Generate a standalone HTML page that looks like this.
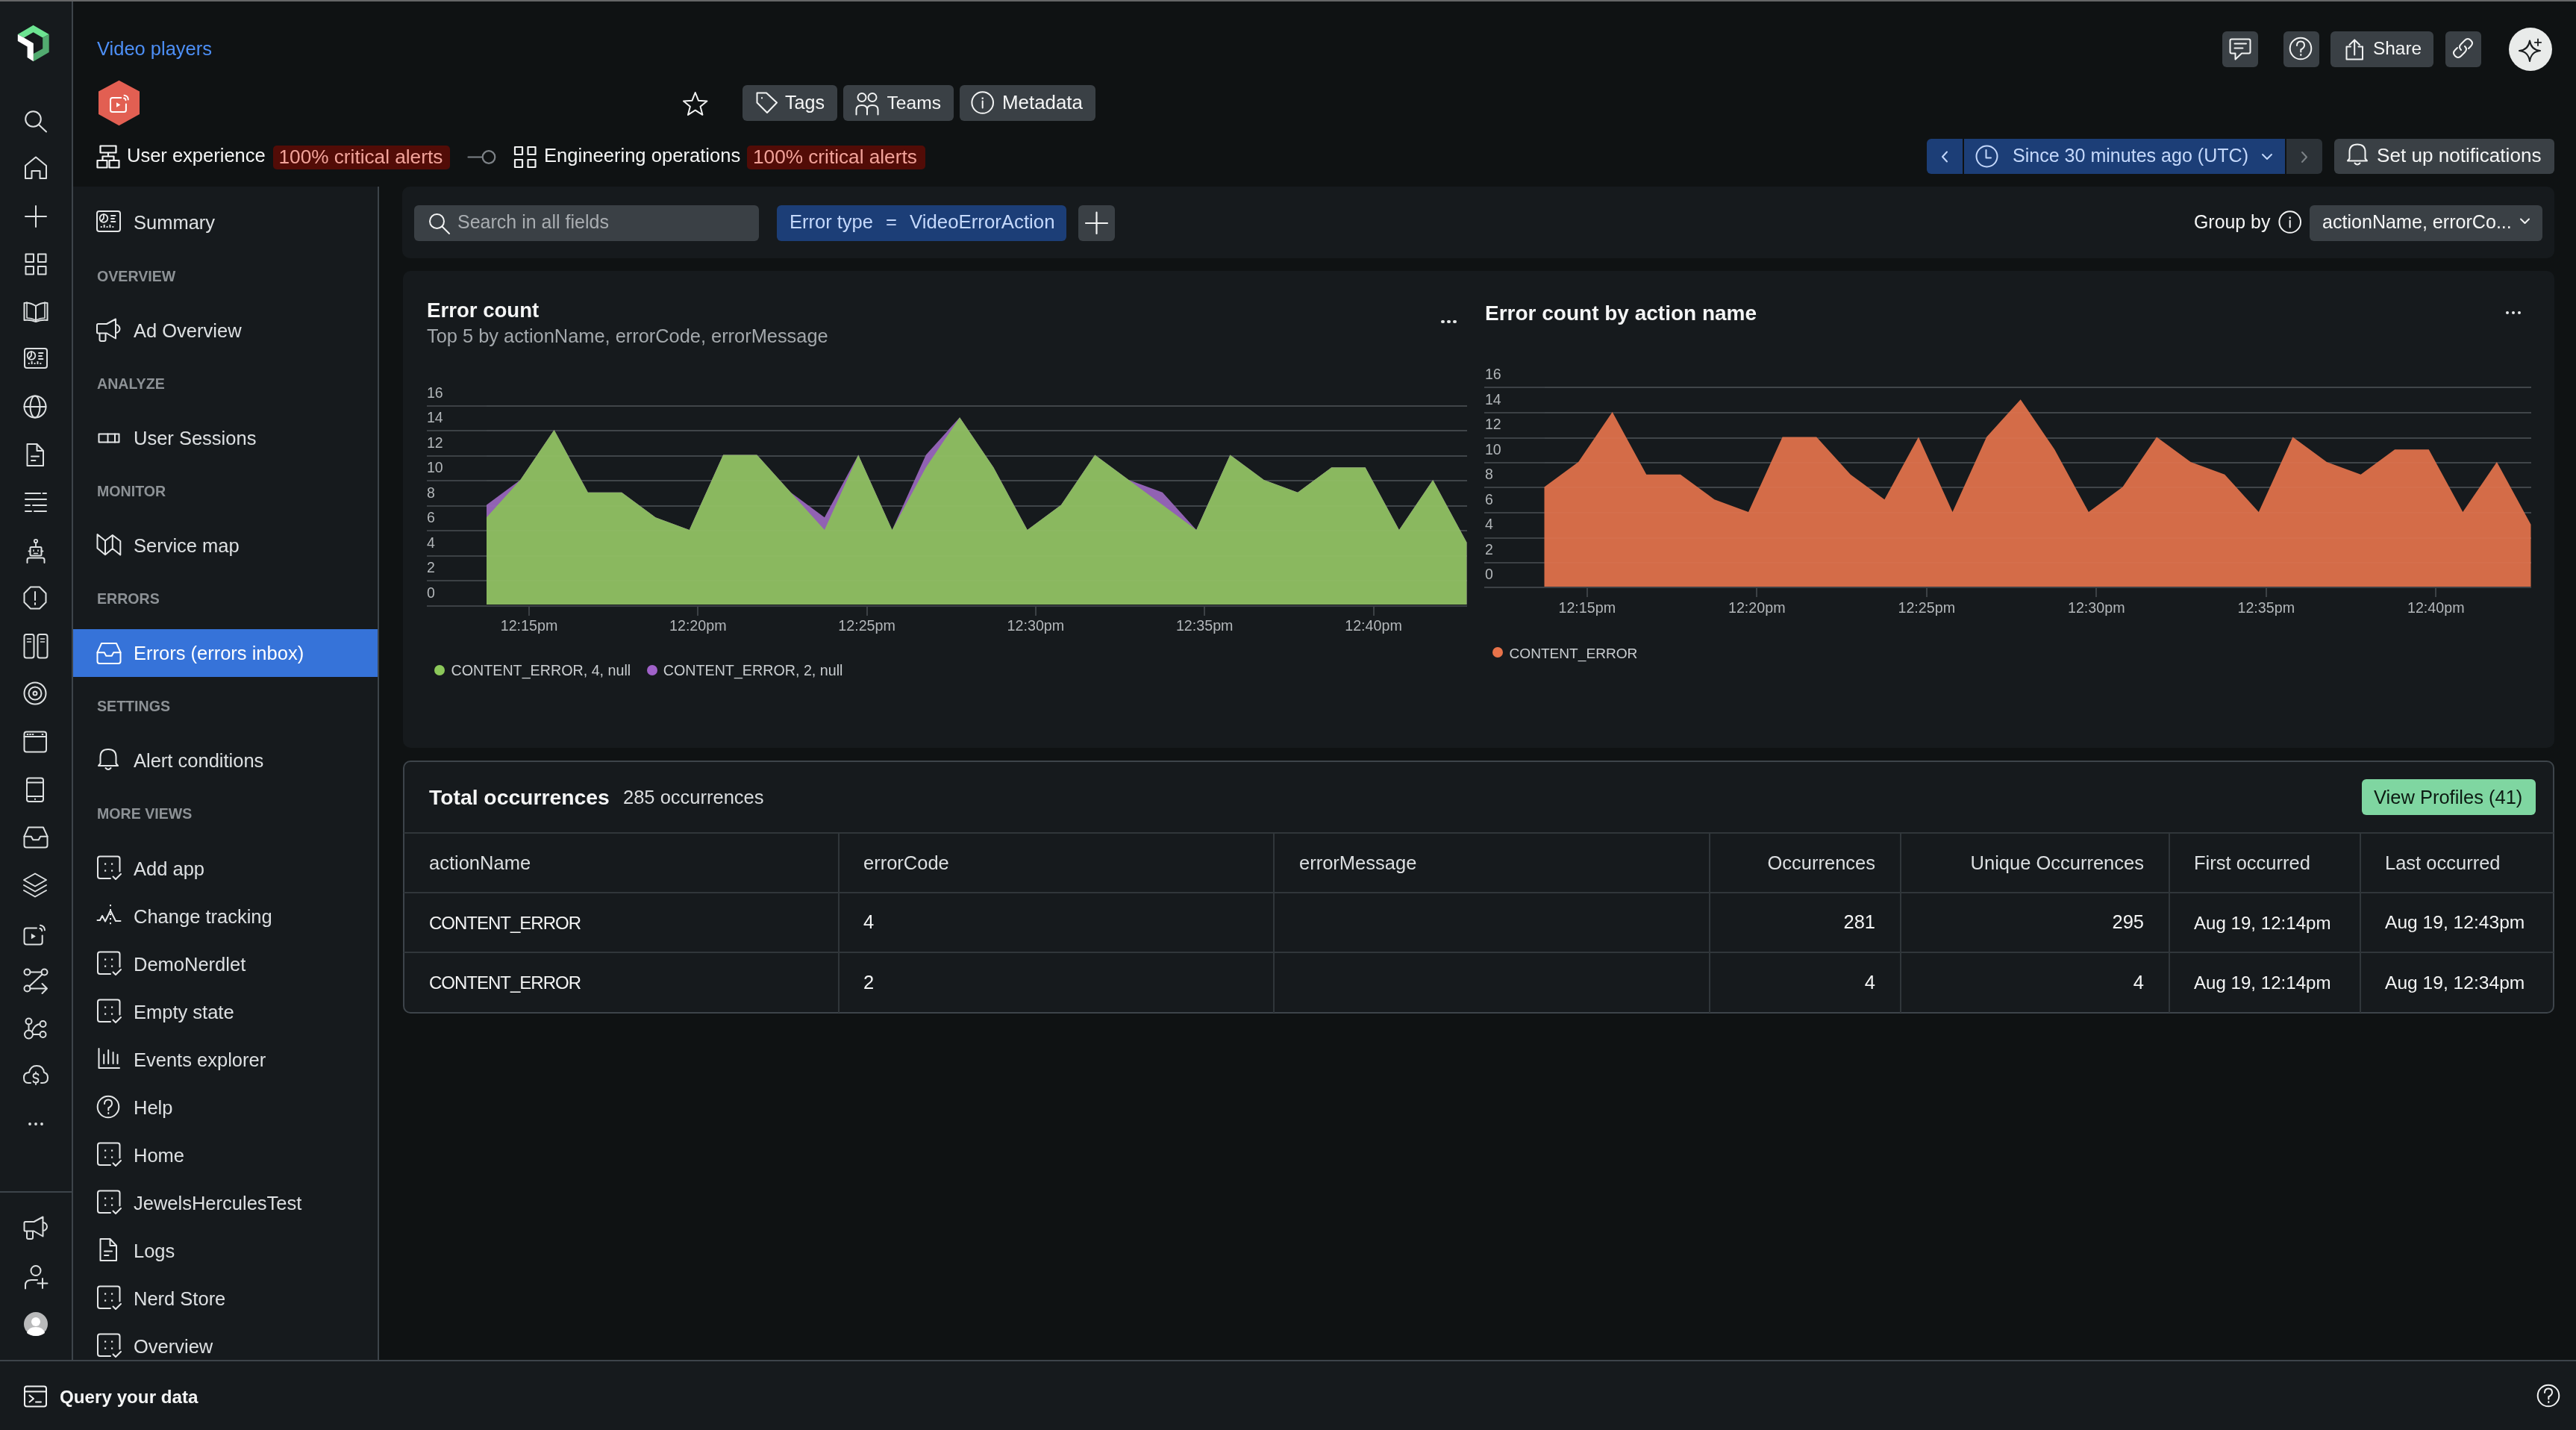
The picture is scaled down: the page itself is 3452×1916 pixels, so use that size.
<!DOCTYPE html><html><head><meta charset="utf-8"><style>
html,body{margin:0;padding:0;}
body{width:3452px;height:1916px;overflow:hidden;background:#0f1213;font-family:"Liberation Sans", sans-serif;position:relative;}
.t{position:absolute;white-space:nowrap;}
#root{position:absolute;left:0;top:0;width:3452px;height:1916px;will-change:transform;}
@media (max-width:1800px){#root{zoom:0.5;} body{width:1726px;height:958px;}}
.r{position:absolute;}
</style></head><body><div id="root">
<div class="r" style="left:0px;top:0px;width:96px;height:1822px;background:#161a1d;"></div>
<div class="r" style="left:96px;top:0px;width:2px;height:1822px;background:#3d444a;"></div>
<div class="r" style="left:0px;top:1596px;width:96px;height:2px;background:#3d444a;"></div>
<div class="r" style="left:0px;top:0px;width:3452px;height:2px;background:#656667;"></div>
<div class="r" style="left:98px;top:250px;width:408px;height:1572px;background:#161a1d;"></div>
<div class="r" style="left:506px;top:250px;width:2px;height:1572px;background:#3d444a;"></div>
<div class="r" style="left:98px;top:843px;width:408px;height:64px;background:#3673d9;"></div>
<div class="r" style="left:0px;top:1822px;width:3452px;height:2px;background:#3d444a;"></div>
<div class="r" style="left:0px;top:1824px;width:3452px;height:92px;background:#161a1d;"></div>
<div class="r" style="left:539px;top:250px;width:2884px;height:96px;background:#161a1d;border-radius:10px;"></div>
<div class="r" style="left:555px;top:275px;width:462px;height:48px;background:#3a4045;border-radius:6px;"></div>
<div class="r" style="left:1041px;top:275px;width:388px;height:48px;background:#1c3e77;border-radius:6px;"></div>
<div class="r" style="left:1445px;top:275px;width:49px;height:48px;background:#3a4045;border-radius:6px;"></div>
<div class="r" style="left:3095px;top:275px;width:312px;height:48px;background:#3a4045;border-radius:6px;"></div>
<div class="r" style="left:540px;top:363px;width:2883px;height:639px;background:#161a1d;border-radius:10px;"></div>
<div class="r" style="left:540px;top:1019px;width:2883px;height:339px;background:#161a1d;border-radius:10px;box-sizing:border-box;border:2px solid #3d444a;"></div>
<div class="r" style="left:995px;top:114px;width:127px;height:48px;background:#3a4045;border-radius:6px;"></div>
<div class="r" style="left:1130px;top:114px;width:148px;height:48px;background:#3a4045;border-radius:6px;"></div>
<div class="r" style="left:1286px;top:114px;width:182px;height:48px;background:#3a4045;border-radius:6px;"></div>
<div class="r" style="left:366px;top:195px;width:237px;height:32px;background:#520c07;border-radius:5px;"></div>
<div class="r" style="left:1001px;top:195px;width:239px;height:32px;background:#520c07;border-radius:5px;"></div>
<div class="r" style="left:2978px;top:42px;width:48px;height:48px;background:#3a4045;border-radius:6px;"></div>
<div class="r" style="left:3060px;top:42px;width:48px;height:48px;background:#3a4045;border-radius:6px;"></div>
<div class="r" style="left:3123px;top:42px;width:138px;height:48px;background:#3a4045;border-radius:6px;"></div>
<div class="r" style="left:3277px;top:42px;width:48px;height:48px;background:#3a4045;border-radius:6px;"></div>
<div class="r" style="left:3362px;top:37px;width:58px;height:58px;border-radius:50%;background:#e9ebea;"></div>
<div class="r" style="left:2582px;top:186px;width:48px;height:47px;background:#1c3e77;border-radius:6px 0 0 6px;"></div>
<div class="r" style="left:2632px;top:186px;width:430px;height:47px;background:#1c3e77;"></div>
<div class="r" style="left:3064px;top:186px;width:48px;height:47px;background:#2c3237;border-radius:0 6px 6px 0;"></div>
<div class="r" style="left:3128px;top:186px;width:295px;height:47px;background:#3a4045;border-radius:6px;"></div>
<div class="t" style="left:130px;top:53.41px;font-size:25.5px;line-height:25.5px;color:#4d8ff6;">Video players</div>
<div class="t" style="left:170px;top:196.41px;font-size:25.5px;line-height:25.5px;color:#f4f5f5;">User experience</div>
<div class="t" style="left:373.5px;top:196.82px;font-size:26.2px;line-height:26.2px;color:#f2a39a;">100% critical alerts</div>
<div class="t" style="left:729px;top:196.33px;font-size:25.6px;line-height:25.6px;color:#f4f5f5;">Engineering operations</div>
<div class="t" style="left:1009px;top:196.82px;font-size:26.2px;line-height:26.2px;color:#f2a39a;">100% critical alerts</div>
<div class="t" style="left:1052px;top:125.25px;font-size:25.1px;line-height:25.1px;color:#f4f5f5;">Tags</div>
<div class="t" style="left:1188.5px;top:125.68px;font-size:24.6px;line-height:24.6px;color:#f4f5f5;">Teams</div>
<div class="t" style="left:1343px;top:124.58px;font-size:25.9px;line-height:25.9px;color:#f4f5f5;">Metadata</div>
<div class="t" style="left:3180px;top:53.35px;font-size:24.4px;line-height:24.4px;color:#f4f5f5;">Share</div>
<div class="t" style="left:2697px;top:196.30px;font-size:25.05px;line-height:25.05px;color:#c4d8fb;">Since 30 minutes ago (UTC)</div>
<div class="t" style="left:3185px;top:194.91px;font-size:26.1px;line-height:26.1px;color:#f4f5f5;">Set up notifications</div>
<div class="t" style="left:613px;top:285.34px;font-size:25.0px;line-height:25.0px;color:#a9adb1;">Search in all fields</div>
<div class="t" style="left:1058px;top:285.41px;font-size:25.5px;line-height:25.5px;color:#c4d8fb;">Error type</div>
<div class="t" style="left:1187px;top:285.41px;font-size:25.5px;line-height:25.5px;color:#c4d8fb;">=</div>
<div class="t" style="left:1219px;top:285.16px;font-size:25.8px;line-height:25.8px;color:#c4d8fb;">VideoErrorAction</div>
<div class="t" style="left:2940px;top:284.92px;font-size:24.9px;line-height:24.9px;color:#f4f5f5;">Group by</div>
<div class="t" style="left:3112px;top:284.75px;font-size:25.1px;line-height:25.1px;color:#f4f5f5;">actionName, errorCo...</div>
<div class="t" style="left:572px;top:402.14px;font-size:27.6px;line-height:27.6px;color:#f4f5f5;font-weight:700;">Error count</div>
<div class="t" style="left:572px;top:437.50px;font-size:25.4px;line-height:25.4px;color:#a3a8ac;">Top 5 by actionName, errorCode, errorMessage</div>
<div class="t" style="left:1990px;top:405.80px;font-size:28.0px;line-height:28.0px;color:#f4f5f5;font-weight:700;">Error count by action name</div>
<div class="t" style="left:179px;top:285.91px;font-size:25.5px;line-height:25.5px;color:#dde0e2;">Summary</div>
<div class="t" style="left:130px;top:361.41px;font-size:19.6px;line-height:19.6px;color:#8d9296;font-weight:700;">OVERVIEW</div>
<div class="t" style="left:130px;top:505.41px;font-size:19.6px;line-height:19.6px;color:#8d9296;font-weight:700;">ANALYZE</div>
<div class="t" style="left:130px;top:649.41px;font-size:19.6px;line-height:19.6px;color:#8d9296;font-weight:700;">MONITOR</div>
<div class="t" style="left:130px;top:793.41px;font-size:19.6px;line-height:19.6px;color:#8d9296;font-weight:700;">ERRORS</div>
<div class="t" style="left:130px;top:937.41px;font-size:19.6px;line-height:19.6px;color:#8d9296;font-weight:700;">SETTINGS</div>
<div class="t" style="left:130px;top:1081.41px;font-size:19.6px;line-height:19.6px;color:#8d9296;font-weight:700;">MORE VIEWS</div>
<div class="t" style="left:179px;top:430.91px;font-size:25.5px;line-height:25.5px;color:#dde0e2;">Ad Overview</div>
<div class="t" style="left:179px;top:574.91px;font-size:25.5px;line-height:25.5px;color:#dde0e2;">User Sessions</div>
<div class="t" style="left:179px;top:718.91px;font-size:25.5px;line-height:25.5px;color:#dde0e2;">Service map</div>
<div class="t" style="left:179px;top:862.91px;font-size:25.5px;line-height:25.5px;color:#ffffff;">Errors (errors inbox)</div>
<div class="t" style="left:179px;top:1006.91px;font-size:25.5px;line-height:25.5px;color:#dde0e2;">Alert conditions</div>
<div class="t" style="left:179px;top:1151.91px;font-size:25.5px;line-height:25.5px;color:#dde0e2;">Add app</div>
<div class="t" style="left:179px;top:1215.91px;font-size:25.5px;line-height:25.5px;color:#dde0e2;">Change tracking</div>
<div class="t" style="left:179px;top:1279.91px;font-size:25.5px;line-height:25.5px;color:#dde0e2;">DemoNerdlet</div>
<div class="t" style="left:179px;top:1343.91px;font-size:25.5px;line-height:25.5px;color:#dde0e2;">Empty state</div>
<div class="t" style="left:179px;top:1407.91px;font-size:25.5px;line-height:25.5px;color:#dde0e2;">Events explorer</div>
<div class="t" style="left:179px;top:1471.91px;font-size:25.5px;line-height:25.5px;color:#dde0e2;">Help</div>
<div class="t" style="left:179px;top:1535.91px;font-size:25.5px;line-height:25.5px;color:#dde0e2;">Home</div>
<div class="t" style="left:179px;top:1599.91px;font-size:25.5px;line-height:25.5px;color:#dde0e2;">JewelsHerculesTest</div>
<div class="t" style="left:179px;top:1663.91px;font-size:25.5px;line-height:25.5px;color:#dde0e2;">Logs</div>
<div class="t" style="left:179px;top:1727.91px;font-size:25.5px;line-height:25.5px;color:#dde0e2;">Nerd Store</div>
<div class="t" style="left:179px;top:1791.91px;font-size:25.5px;line-height:25.5px;color:#dde0e2;">Overview</div>
<div class="t" style="left:80px;top:1859.51px;font-size:24.2px;line-height:24.2px;color:#f4f5f5;font-weight:700;">Query your data</div>
<div class="t" style="left:575px;top:1053.64px;font-size:28.3px;line-height:28.3px;color:#f4f5f5;font-weight:700;">Total occurrences</div>
<div class="t" style="left:835px;top:1056.01px;font-size:25.5px;line-height:25.5px;color:#d9dcde;">285 occurrences</div>
<div class="r" style="left:3165px;top:1044px;width:233px;height:48px;background:#7fd6a1;border-radius:6px;"></div>
<div class="t" style="left:3181px;top:1055.91px;font-size:25.5px;line-height:25.5px;color:#0c1a12;">View Profiles (41)</div>
<div class="r" style="left:541px;top:1115px;width:2881px;height:2px;background:#30363a;"></div>
<div class="r" style="left:541px;top:1195px;width:2881px;height:2px;background:#30363a;"></div>
<div class="r" style="left:541px;top:1275px;width:2881px;height:2px;background:#30363a;"></div>
<div class="r" style="left:1123px;top:1117px;width:2px;height:240px;background:#30363a;"></div>
<div class="r" style="left:1706px;top:1117px;width:2px;height:240px;background:#30363a;"></div>
<div class="r" style="left:2290px;top:1117px;width:2px;height:240px;background:#30363a;"></div>
<div class="r" style="left:2546px;top:1117px;width:2px;height:240px;background:#30363a;"></div>
<div class="r" style="left:2906px;top:1117px;width:2px;height:240px;background:#30363a;"></div>
<div class="r" style="left:3162px;top:1117px;width:2px;height:240px;background:#30363a;"></div>
<div class="t" style="left:575px;top:1144.41px;font-size:25.5px;line-height:25.5px;color:#dcdfe1;">actionName</div>
<div class="t" style="left:1157px;top:1144.41px;font-size:25.5px;line-height:25.5px;color:#dcdfe1;">errorCode</div>
<div class="t" style="left:1741px;top:1144.41px;font-size:25.5px;line-height:25.5px;color:#dcdfe1;">errorMessage</div>
<div class="t" style="right:939px;top:1144.41px;font-size:25.5px;line-height:25.5px;color:#dcdfe1;">Occurrences</div>
<div class="t" style="right:579px;top:1144.41px;font-size:25.5px;line-height:25.5px;color:#dcdfe1;">Unique Occurrences</div>
<div class="t" style="left:2940px;top:1144.41px;font-size:25.5px;line-height:25.5px;color:#dcdfe1;">First occurred</div>
<div class="t" style="left:3196px;top:1144.41px;font-size:25.5px;line-height:25.5px;color:#dcdfe1;">Last occurred</div>
<div class="t" style="left:575px;top:1224.68px;font-size:24px;line-height:24px;color:#f4f5f5;letter-spacing:-1.0px;">CONTENT_ERROR</div>
<div class="t" style="left:1157px;top:1223.41px;font-size:25.5px;line-height:25.5px;color:#f4f5f5;">4</div>
<div class="t" style="right:939px;top:1223.41px;font-size:25.5px;line-height:25.5px;color:#f4f5f5;">281</div>
<div class="t" style="right:579px;top:1223.41px;font-size:25.5px;line-height:25.5px;color:#f4f5f5;">295</div>
<div class="t" style="left:2940px;top:1224.60px;font-size:24.1px;line-height:24.1px;color:#f4f5f5;">Aug 19, 12:14pm</div>
<div class="t" style="left:3196px;top:1224.18px;font-size:24.6px;line-height:24.6px;color:#f4f5f5;">Aug 19, 12:43pm</div>
<div class="t" style="left:575px;top:1305.18px;font-size:24px;line-height:24px;color:#f4f5f5;letter-spacing:-1.0px;">CONTENT_ERROR</div>
<div class="t" style="left:1157px;top:1303.91px;font-size:25.5px;line-height:25.5px;color:#f4f5f5;">2</div>
<div class="t" style="right:939px;top:1303.91px;font-size:25.5px;line-height:25.5px;color:#f4f5f5;">4</div>
<div class="t" style="right:579px;top:1303.91px;font-size:25.5px;line-height:25.5px;color:#f4f5f5;">4</div>
<div class="t" style="left:2940px;top:1305.10px;font-size:24.1px;line-height:24.1px;color:#f4f5f5;">Aug 19, 12:14pm</div>
<div class="t" style="left:3196px;top:1304.68px;font-size:24.6px;line-height:24.6px;color:#f4f5f5;">Aug 19, 12:34pm</div>
<div class="r" style="left:572px;top:543px;width:1394px;height:2px;background:#3c4145;"></div>
<div class="r" style="left:572px;top:576px;width:1394px;height:2px;background:#3c4145;"></div>
<div class="r" style="left:572px;top:610px;width:1394px;height:2px;background:#3c4145;"></div>
<div class="r" style="left:572px;top:643px;width:1394px;height:2px;background:#3c4145;"></div>
<div class="r" style="left:572px;top:677px;width:1394px;height:2px;background:#3c4145;"></div>
<div class="r" style="left:572px;top:710px;width:1394px;height:2px;background:#3c4145;"></div>
<div class="r" style="left:572px;top:744px;width:1394px;height:2px;background:#3c4145;"></div>
<div class="r" style="left:572px;top:777px;width:1394px;height:2px;background:#3c4145;"></div>
<div class="r" style="left:572px;top:811px;width:1394px;height:2px;background:#3c4145;"></div>
<div class="t" style="left:572px;top:516.74px;font-size:19.5px;line-height:19.5px;color:#b3b7ba;">16</div>
<div class="t" style="left:572px;top:550.24px;font-size:19.5px;line-height:19.5px;color:#b3b7ba;">14</div>
<div class="t" style="left:572px;top:583.74px;font-size:19.5px;line-height:19.5px;color:#b3b7ba;">12</div>
<div class="t" style="left:572px;top:617.24px;font-size:19.5px;line-height:19.5px;color:#b3b7ba;">10</div>
<div class="t" style="left:572px;top:650.74px;font-size:19.5px;line-height:19.5px;color:#b3b7ba;">8</div>
<div class="t" style="left:572px;top:684.24px;font-size:19.5px;line-height:19.5px;color:#b3b7ba;">6</div>
<div class="t" style="left:572px;top:717.74px;font-size:19.5px;line-height:19.5px;color:#b3b7ba;">4</div>
<div class="t" style="left:572px;top:751.24px;font-size:19.5px;line-height:19.5px;color:#b3b7ba;">2</div>
<div class="t" style="left:572px;top:784.74px;font-size:19.5px;line-height:19.5px;color:#b3b7ba;">0</div>
<svg class="r" style="left:572px;top:503.75px" width="1394" height="308.0" viewBox="0 0 1394 308.0"><path d="M80.00,306.00 L80.00,172.50 L125.29,139.00 L170.59,72.00 L215.88,155.75 L261.17,155.75 L306.47,189.25 L351.76,206.00 L397.05,105.50 L442.34,105.50 L487.64,155.75 L532.93,189.25 L578.22,105.50 L623.52,206.00 L668.81,105.50 L714.10,55.25 L759.40,122.25 L804.69,206.00 L849.98,172.50 L895.28,105.50 L940.57,139.00 L985.86,155.75 L1031.16,206.00 L1076.45,105.50 L1121.74,139.00 L1167.03,155.75 L1212.33,122.25 L1257.62,122.25 L1302.91,206.00 L1348.21,139.00 L1393.50,222.75 L1393.50,306.00 Z" fill="#9162b3" stroke="none"/><path d="M80.00,306.00 L80.00,189.25 L125.29,139.00 L170.59,72.00 L215.88,155.75 L261.17,155.75 L306.47,189.25 L351.76,206.00 L397.05,105.50 L442.34,105.50 L487.64,155.75 L532.93,206.00 L578.22,105.50 L623.52,206.00 L668.81,122.25 L714.10,55.25 L759.40,122.25 L804.69,206.00 L849.98,172.50 L895.28,105.50 L940.57,139.00 L985.86,172.50 L1031.16,206.00 L1076.45,105.50 L1121.74,139.00 L1167.03,155.75 L1212.33,122.25 L1257.62,122.25 L1302.91,206.00 L1348.21,139.00 L1393.50,222.75 L1393.50,306.00 Z" fill="#8ab85f" stroke="none"/></svg>
<div class="r" style="left:652px;top:543px;width:1314px;height:2px;background:rgba(255,255,255,0.025);"></div>
<div class="r" style="left:652px;top:576px;width:1314px;height:2px;background:rgba(255,255,255,0.025);"></div>
<div class="r" style="left:652px;top:610px;width:1314px;height:2px;background:rgba(255,255,255,0.025);"></div>
<div class="r" style="left:652px;top:643px;width:1314px;height:2px;background:rgba(255,255,255,0.025);"></div>
<div class="r" style="left:652px;top:677px;width:1314px;height:2px;background:rgba(255,255,255,0.025);"></div>
<div class="r" style="left:652px;top:710px;width:1314px;height:2px;background:rgba(255,255,255,0.025);"></div>
<div class="r" style="left:652px;top:744px;width:1314px;height:2px;background:rgba(255,255,255,0.025);"></div>
<div class="r" style="left:652px;top:777px;width:1314px;height:2px;background:rgba(255,255,255,0.025);"></div>
<div class="r" style="left:708px;top:813px;width:2px;height:12px;background:#3c4145;"></div>
<div class="t" style="left:409.0px;width:600px;text-align:center;top:829.32px;font-size:19.7px;line-height:19.7px;color:#b3b7ba;">12:15pm</div>
<div class="r" style="left:934px;top:813px;width:2px;height:12px;background:#3c4145;"></div>
<div class="t" style="left:635.3px;width:600px;text-align:center;top:829.32px;font-size:19.7px;line-height:19.7px;color:#b3b7ba;">12:20pm</div>
<div class="r" style="left:1161px;top:813px;width:2px;height:12px;background:#3c4145;"></div>
<div class="t" style="left:861.5999999999999px;width:600px;text-align:center;top:829.32px;font-size:19.7px;line-height:19.7px;color:#b3b7ba;">12:25pm</div>
<div class="r" style="left:1387px;top:813px;width:2px;height:12px;background:#3c4145;"></div>
<div class="t" style="left:1087.9px;width:600px;text-align:center;top:829.32px;font-size:19.7px;line-height:19.7px;color:#b3b7ba;">12:30pm</div>
<div class="r" style="left:1613px;top:813px;width:2px;height:12px;background:#3c4145;"></div>
<div class="t" style="left:1314.2px;width:600px;text-align:center;top:829.32px;font-size:19.7px;line-height:19.7px;color:#b3b7ba;">12:35pm</div>
<div class="r" style="left:1840px;top:813px;width:2px;height:12px;background:#3c4145;"></div>
<div class="t" style="left:1540.5px;width:600px;text-align:center;top:829.32px;font-size:19.7px;line-height:19.7px;color:#b3b7ba;">12:40pm</div>
<div class="r" style="left:1989px;top:518px;width:1403px;height:2px;background:#3c4145;"></div>
<div class="r" style="left:1989px;top:552px;width:1403px;height:2px;background:#3c4145;"></div>
<div class="r" style="left:1989px;top:586px;width:1403px;height:2px;background:#3c4145;"></div>
<div class="r" style="left:1989px;top:619px;width:1403px;height:2px;background:#3c4145;"></div>
<div class="r" style="left:1989px;top:652px;width:1403px;height:2px;background:#3c4145;"></div>
<div class="r" style="left:1989px;top:686px;width:1403px;height:2px;background:#3c4145;"></div>
<div class="r" style="left:1989px;top:720px;width:1403px;height:2px;background:#3c4145;"></div>
<div class="r" style="left:1989px;top:753px;width:1403px;height:2px;background:#3c4145;"></div>
<div class="r" style="left:1989px;top:786px;width:1403px;height:2px;background:#3c4145;"></div>
<div class="t" style="left:1990px;top:492.49px;font-size:19.5px;line-height:19.5px;color:#b3b7ba;">16</div>
<div class="t" style="left:1990px;top:525.99px;font-size:19.5px;line-height:19.5px;color:#b3b7ba;">14</div>
<div class="t" style="left:1990px;top:559.49px;font-size:19.5px;line-height:19.5px;color:#b3b7ba;">12</div>
<div class="t" style="left:1990px;top:592.99px;font-size:19.5px;line-height:19.5px;color:#b3b7ba;">10</div>
<div class="t" style="left:1990px;top:626.49px;font-size:19.5px;line-height:19.5px;color:#b3b7ba;">8</div>
<div class="t" style="left:1990px;top:659.99px;font-size:19.5px;line-height:19.5px;color:#b3b7ba;">6</div>
<div class="t" style="left:1990px;top:693.49px;font-size:19.5px;line-height:19.5px;color:#b3b7ba;">4</div>
<div class="t" style="left:1990px;top:726.99px;font-size:19.5px;line-height:19.5px;color:#b3b7ba;">2</div>
<div class="t" style="left:1990px;top:760.49px;font-size:19.5px;line-height:19.5px;color:#b3b7ba;">0</div>
<svg class="r" style="left:1989px;top:479.5px" width="1403" height="308.0" viewBox="0 0 1403 308.0"><path d="M80.50,306.00 L80.50,172.50 L126.09,139.00 L171.67,72.00 L217.26,155.75 L262.84,155.75 L308.43,189.25 L354.02,206.00 L399.60,105.50 L445.19,105.50 L490.78,155.75 L536.36,189.25 L581.95,105.50 L627.53,206.00 L673.12,105.50 L718.71,55.25 L764.29,122.25 L809.88,206.00 L855.47,172.50 L901.05,105.50 L946.64,139.00 L992.22,155.75 L1037.81,206.00 L1083.40,105.50 L1128.98,139.00 L1174.57,155.75 L1220.16,122.25 L1265.74,122.25 L1311.33,206.00 L1356.91,139.00 L1402.50,222.75 L1402.50,306.00 Z" fill="#d46c48" stroke="none"/></svg>
<div class="r" style="left:2069.5px;top:518px;width:1322.5px;height:2px;background:rgba(255,255,255,0.025);"></div>
<div class="r" style="left:2069.5px;top:552px;width:1322.5px;height:2px;background:rgba(255,255,255,0.025);"></div>
<div class="r" style="left:2069.5px;top:586px;width:1322.5px;height:2px;background:rgba(255,255,255,0.025);"></div>
<div class="r" style="left:2069.5px;top:619px;width:1322.5px;height:2px;background:rgba(255,255,255,0.025);"></div>
<div class="r" style="left:2069.5px;top:652px;width:1322.5px;height:2px;background:rgba(255,255,255,0.025);"></div>
<div class="r" style="left:2069.5px;top:686px;width:1322.5px;height:2px;background:rgba(255,255,255,0.025);"></div>
<div class="r" style="left:2069.5px;top:720px;width:1322.5px;height:2px;background:rgba(255,255,255,0.025);"></div>
<div class="r" style="left:2069.5px;top:753px;width:1322.5px;height:2px;background:rgba(255,255,255,0.025);"></div>
<div class="r" style="left:2126px;top:788px;width:2px;height:12px;background:#3c4145;"></div>
<div class="t" style="left:1826.75px;width:600px;text-align:center;top:805.32px;font-size:19.7px;line-height:19.7px;color:#b3b7ba;">12:15pm</div>
<div class="r" style="left:2353px;top:788px;width:2px;height:12px;background:#3c4145;"></div>
<div class="t" style="left:2054.25px;width:600px;text-align:center;top:805.32px;font-size:19.7px;line-height:19.7px;color:#b3b7ba;">12:20pm</div>
<div class="r" style="left:2581px;top:788px;width:2px;height:12px;background:#3c4145;"></div>
<div class="t" style="left:2281.75px;width:600px;text-align:center;top:805.32px;font-size:19.7px;line-height:19.7px;color:#b3b7ba;">12:25pm</div>
<div class="r" style="left:2808px;top:788px;width:2px;height:12px;background:#3c4145;"></div>
<div class="t" style="left:2509.25px;width:600px;text-align:center;top:805.32px;font-size:19.7px;line-height:19.7px;color:#b3b7ba;">12:30pm</div>
<div class="r" style="left:3036px;top:788px;width:2px;height:12px;background:#3c4145;"></div>
<div class="t" style="left:2736.75px;width:600px;text-align:center;top:805.32px;font-size:19.7px;line-height:19.7px;color:#b3b7ba;">12:35pm</div>
<div class="r" style="left:3263px;top:788px;width:2px;height:12px;background:#3c4145;"></div>
<div class="t" style="left:2964.25px;width:600px;text-align:center;top:805.32px;font-size:19.7px;line-height:19.7px;color:#b3b7ba;">12:40pm</div>
<div class="r" style="left:582px;top:891px;width:14px;height:14px;border-radius:50%;background:#8cc85a;"></div>
<div class="t" style="left:604.5px;top:888.82px;font-size:19.7px;line-height:19.7px;color:#c9cdd0;">CONTENT_ERROR, 4, null</div>
<div class="r" style="left:866.5px;top:891px;width:14px;height:14px;border-radius:50%;background:#a062c9;"></div>
<div class="t" style="left:888.75px;top:888.82px;font-size:19.7px;line-height:19.7px;color:#c9cdd0;">CONTENT_ERROR, 2, null</div>
<div class="r" style="left:2000px;top:867px;width:14px;height:14px;border-radius:50%;background:#e8734a;"></div>
<div class="t" style="left:2022.5px;top:865.83px;font-size:19.1px;line-height:19.1px;color:#c9cdd0;">CONTENT_ERROR</div>
<div class="r" style="left:1931.3px;top:428.8px;width:4.4px;height:4.4px;border-radius:50%;background:#e6e8e9;"></div>
<div class="r" style="left:1939.3px;top:428.8px;width:4.4px;height:4.4px;border-radius:50%;background:#e6e8e9;"></div>
<div class="r" style="left:1947.3px;top:428.8px;width:4.4px;height:4.4px;border-radius:50%;background:#e6e8e9;"></div>
<div class="r" style="left:3357.8px;top:416.8px;width:4.4px;height:4.4px;border-radius:50%;background:#e6e8e9;"></div>
<div class="r" style="left:3365.8px;top:416.8px;width:4.4px;height:4.4px;border-radius:50%;background:#e6e8e9;"></div>
<div class="r" style="left:3373.8px;top:416.8px;width:4.4px;height:4.4px;border-radius:50%;background:#e6e8e9;"></div>
<svg class="r" style="left:0;top:0" width="3452" height="1916" viewBox="0 0 3452 1916" stroke-linecap="round" stroke-linejoin="round"><path d="M44.6,33.8 L65.7,46.1 L57.2,50.6 L44.6,43.2 L32.1,50.4 L23.8,46.1 Z" fill="#6de492" stroke="none"/><path d="M65.7,46.1 L65.7,70.1 L44.8,82.2 L44.8,71.9 L57.2,65.2 L57.2,50.6 Z" fill="#52ab70" stroke="none"/><path d="M23.8,46.1 L32.1,50.4 L44.8,58 L44.8,82.2 L36.6,77 L36.6,62.5 L23.8,55.1 Z" fill="#ffffff" stroke="none"/><circle cx="44.5" cy="159.5" r="10.3" stroke="#dcdfe0" stroke-width="2.0" fill="none"/><path d="M52.2,167.2 L62,176.5" stroke="#dcdfe0" stroke-width="2.0" fill="none" /><path d="M34,239 L34,222 L48,210.5 L62,222 L62,239 L53.5,239 L53.5,229 L42.5,229 L42.5,239 Z" stroke="#dcdfe0" stroke-width="2.0" fill="none" /><path d="M48,276 L48,304 M34,290 L62,290" stroke="#dcdfe0" stroke-width="2.0" fill="none" /><rect x="34.5" y="340.5" width="10.5" height="10.5" rx="0" stroke="#dcdfe0" stroke-width="2.0" fill="none"/><rect x="34.5" y="357" width="10.5" height="10.5" rx="0" stroke="#dcdfe0" stroke-width="2.0" fill="none"/><rect x="51" y="340.5" width="10.5" height="10.5" rx="0" stroke="#dcdfe0" stroke-width="2.0" fill="none"/><rect x="51" y="357" width="10.5" height="10.5" rx="0" stroke="#dcdfe0" stroke-width="2.0" fill="none"/><path d="M48,410 Q40,405 32.5,406 L32.5,429 Q40,428 48,431 Q56,428 63.5,429 L63.5,406 Q56,405 48,410 Z M48,410 L48,431" stroke="#dcdfe0" stroke-width="2.0" fill="none" /><path d="M36,405 L36,426 Q42,426 48,429 M60,405 L60,426 Q54,426 48,429" stroke="#dcdfe0" stroke-width="1.6" fill="none" /><rect x="33" y="467" width="30" height="26" rx="3" stroke="#dcdfe0" stroke-width="2.0" fill="none"/><circle cx="42" cy="476.5" r="5.3" stroke="#dcdfe0" stroke-width="1.8" fill="none"/><path d="M42,471.2 L42,476.5 L38.3,480.3" stroke="#dcdfe0" stroke-width="1.8" fill="none" /><path d="M52,473 L57.5,473 M52,477 L56,477 M52,481 L57.5,481" stroke="#dcdfe0" stroke-width="1.8" fill="none" /><rect x="37.8" y="486.0" width="1.9" height="2.0" fill="#dcdfe0"/><rect x="41.699999999999996" y="484.0" width="1.9" height="4.0" fill="#dcdfe0"/><rect x="45.599999999999994" y="486.0" width="1.9" height="2.0" fill="#dcdfe0"/><rect x="49.5" y="484.0" width="1.9" height="4.0" fill="#dcdfe0"/><rect x="53.4" y="486.0" width="1.9" height="2.0" fill="#dcdfe0"/><circle cx="47" cy="545" r="14.5" stroke="#dcdfe0" stroke-width="2.0" fill="none"/><path d="M32.5,545 L61.5,545" stroke="#dcdfe0" stroke-width="2.0" fill="none" /><ellipse cx="47" cy="545" rx="6.5" ry="14.5" stroke="#dcdfe0" stroke-width="2.0" fill="none"/><path d="M36.5,595 L49.5,595 L58.0,604 L58.0,624 L36.5,624 Z M49.5,595 L49.5,604 L58.0,604" stroke="#dcdfe0" stroke-width="2.0" fill="none" /><path d="M42.0,611.5 L52.0,611.5 M42.0,617 L47.5,617" stroke="#dcdfe0" stroke-width="2.0" fill="none" /><path d="M34,661 L54,661 M57.5,661 L62,661 M34,669 L62,669 M34,677 L40,677 M44,677 L62,677 M34,685 L42,685 M46,685 L62,685" stroke="#dcdfe0" stroke-width="2.0" fill="none" /><rect x="40.5" y="733" width="15" height="11.5" rx="1.5" stroke="#dcdfe0" stroke-width="2.0" fill="none"/><circle cx="48" cy="725" r="2.2" stroke="#dcdfe0" stroke-width="1.8" fill="none"/><path d="M48,727 L48,733 M38.5,738.5 L40.5,738.5 M55.5,738.5 L57.5,738.5" stroke="#dcdfe0" stroke-width="1.8" fill="none" /><path d="M45,737 L45,738.5 M51,737 L51,738.5 M45.5,741.5 L50.5,741.5" stroke="#dcdfe0" stroke-width="1.6" fill="none" /><path d="M36.5,754 L36.5,750 Q36.5,747.5 39,747.5 L57,747.5 Q59.5,747.5 59.5,750 L59.5,754" stroke="#dcdfe0" stroke-width="2.0" fill="none" /><path d="M41,786.5 L53,786.5 L61.5,795 L61.5,807 L53,815.5 L41,815.5 L32.5,807 L32.5,795 Z M47,793 L47,804 M47,808 L47,810" stroke="#dcdfe0" stroke-width="2.0" fill="none" /><rect x="32.5" y="850" width="13" height="31.5" rx="3" stroke="#dcdfe0" stroke-width="2.0" fill="none"/><rect x="50.5" y="850" width="13" height="31.5" rx="3" stroke="#dcdfe0" stroke-width="2.0" fill="none"/><path d="M36.5,856 L41.5,856 M36.5,860 L41.5,860 M54.5,856 L59.5,856 M54.5,860 L59.5,860" stroke="#dcdfe0" stroke-width="1.6" fill="none" /><circle cx="47" cy="929" r="14.5" stroke="#dcdfe0" stroke-width="2.0" fill="none"/><circle cx="47" cy="929" r="8.5" stroke="#dcdfe0" stroke-width="2.0" fill="none"/><circle cx="47" cy="929" r="2.5" stroke="#dcdfe0" stroke-width="2.0" fill="none"/><rect x="32.5" y="980.5" width="29.5" height="27" rx="3" stroke="#dcdfe0" stroke-width="2.0" fill="none"/><path d="M32.5,987 L62,987" stroke="#dcdfe0" stroke-width="2.0" fill="none" /><path d="M36.5,984 L37.5,984 M40,984 L41,984 M43.5,984 L44.5,984 M56.5,984 L57.5,984" stroke="#dcdfe0" stroke-width="1.8" fill="none" /><rect x="36" y="1042.5" width="22" height="31.5" rx="3" stroke="#dcdfe0" stroke-width="2.0" fill="none"/><path d="M36,1067 L58,1067 M36,1048.5 L58,1048.5 M47,1070.5 L47,1071" stroke="#dcdfe0" stroke-width="2.0" fill="none" /><path d="M32.5,1120.65 L38.08,1108.5 L57.92,1108.5 L63.5,1120.65 L63.5,1132.5 Q63.5,1135.5 60.5,1135.5 L35.5,1135.5 Q32.5,1135.5 32.5,1132.5 Z" stroke="#dcdfe0" stroke-width="2.0" fill="none" /><path d="M32.5,1120.65 L41.8,1120.65 L44.28,1125.24 L51.72,1125.24 L54.2,1120.65 L63.5,1120.65" stroke="#dcdfe0" stroke-width="2.0" fill="none" /><path d="M47,1170.5 L62,1179 L47,1187.5 L32,1179 Z" stroke="#dcdfe0" stroke-width="2.0" fill="none" /><path d="M32,1186 L47,1194.5 L62,1186 M32,1193 L47,1201.5 L62,1193" stroke="#dcdfe0" stroke-width="2.0" fill="none" /><path d="M49.0,1243.5 L35.8,1243.5 Q32.5,1243.5 32.5,1246.8 L32.5,1262.2 Q32.5,1265.5 35.8,1265.5 L53.400000000000006,1265.5 Q56.7,1265.5 56.7,1262.2 L56.7,1253.4" stroke="#dcdfe0" stroke-width="2.0" fill="none" /><path d="M41.85,1250.65 L47.900000000000006,1254.5 L41.85,1258.35 Z" fill="#dcdfe0"/><path d="M53.95,1239.65 A6.6000000000000005,6.6000000000000005 0 0 1 60.0,1246.25 M53.400000000000006,1244.05 A2.8600000000000003,2.8600000000000003 0 0 1 56.150000000000006,1247.13" stroke="#dcdfe0" stroke-width="2.0" fill="none" /><circle cx="36.5" cy="1302.5" r="4" stroke="#dcdfe0" stroke-width="2.0" fill="none"/><circle cx="59.5" cy="1302.5" r="4" stroke="#dcdfe0" stroke-width="2.0" fill="none"/><circle cx="36.5" cy="1324.5" r="4" stroke="#dcdfe0" stroke-width="2.0" fill="none"/><path d="M40.5,1302.5 L55.5,1302.5 M56.5,1305.5 L39.5,1321.5 M40.5,1324.5 L63,1324.5 M56.5,1318 L63,1324.5 L56.5,1331" stroke="#dcdfe0" stroke-width="2.0" fill="none" /><circle cx="38.5" cy="1368.5" r="4" stroke="#dcdfe0" stroke-width="2.0" fill="none"/><circle cx="57.5" cy="1372" r="4" stroke="#dcdfe0" stroke-width="2.0" fill="none"/><circle cx="38.5" cy="1386" r="5.5" stroke="#dcdfe0" stroke-width="2.0" fill="none"/><circle cx="57.5" cy="1386" r="4" stroke="#dcdfe0" stroke-width="2.0" fill="none"/><path d="M38.5,1372.5 L38.5,1380.5 M44,1386 L53.5,1386 M43,1382 Q46,1373 53.5,1372" stroke="#dcdfe0" stroke-width="2.0" fill="none" /><path d="M41,1451 L38,1451 Q32,1451 32,1444 Q32,1437 39,1437 Q41,1428 49,1428 Q58,1428 59,1437 Q64,1438 64,1444 Q64,1451 57,1451 L55,1451" stroke="#dcdfe0" stroke-width="2.0" fill="none" /><path d="M51.5,1440.5 Q51,1438.5 48,1438.5 Q44.5,1438.5 44.5,1441.5 Q44.5,1444 48,1444.5 Q51.5,1445 51.5,1447.5 Q51.5,1450.5 48,1450.5 Q45,1450.5 44.5,1448.5 M48,1436.5 L48,1438.5 M48,1450.5 L48,1453" stroke="#dcdfe0" stroke-width="1.8" fill="none" /><circle cx="40" cy="1506" r="1.9" stroke="#dcdfe0" stroke-width="0" fill="#dcdfe0"/><circle cx="48" cy="1506" r="1.9" stroke="#dcdfe0" stroke-width="0" fill="#dcdfe0"/><circle cx="56" cy="1506" r="1.9" stroke="#dcdfe0" stroke-width="0" fill="#dcdfe0"/><path d="M34.0,1637.0 L45.5,1637.0 L57.5,1630.5 L57.5,1656.5 L45.5,1649.5 L34.0,1649.5 Q32.5,1649.5 32.5,1648.0 L32.5,1638.5 Q32.5,1637.0 34.0,1637.0 Z M57.5,1638.0 A5.5,5.5 0 0 1 57.5,1649.0 M36.0,1649.5 L36.0,1658.0 Q36.0,1660.0 38.0,1660.0 L42.0,1660.0 Q44.0,1660.0 44.0,1658.0 L44.0,1649.5" stroke="#dcdfe0" stroke-width="2.0" fill="none" /><circle cx="48" cy="1702.5" r="6.5" stroke="#dcdfe0" stroke-width="2.0" fill="none"/><path d="M34,1726.5 L34,1722 Q34,1715 42,1715 L50,1715 M57,1713 L57,1726 M50.5,1719.5 L63.5,1719.5" stroke="#dcdfe0" stroke-width="2.0" fill="none" /><circle cx="48" cy="1774" r="16" fill="#b9babb"/><circle cx="48" cy="1771" r="6" fill="#ffffff"/><path d="M36,1786 Q38,1778 48,1778 Q58,1778 60,1786 Q55,1790 48,1790 Q41,1790 36,1786 Z" fill="#ffffff"/><rect x="130" y="283" width="31" height="27" rx="3" stroke="#e4e6e7" stroke-width="2.0" fill="none"/><circle cx="139" cy="292.5" r="5.3" stroke="#e4e6e7" stroke-width="1.8" fill="none"/><path d="M139,287.2 L139,292.5 L135.3,296.3" stroke="#e4e6e7" stroke-width="1.8" fill="none" /><path d="M149,289 L154.5,289 M149,293 L153,293 M149,297 L154.5,297" stroke="#e4e6e7" stroke-width="1.8" fill="none" /><rect x="134.8" y="303.0" width="1.9" height="2.0" fill="#e4e6e7"/><rect x="138.70000000000002" y="301.0" width="1.9" height="4.0" fill="#e4e6e7"/><rect x="142.60000000000002" y="303.0" width="1.9" height="2.0" fill="#e4e6e7"/><rect x="146.5" y="301.0" width="1.9" height="4.0" fill="#e4e6e7"/><rect x="150.4" y="303.0" width="1.9" height="2.0" fill="#e4e6e7"/><path d="M131.5,434.0 L143,434.0 L155,427.5 L155,453.5 L143,446.5 L131.5,446.5 Q130,446.5 130,445.0 L130,435.5 Q130,434.0 131.5,434.0 Z M155,435.0 A5.5,5.5 0 0 1 155,446.0 M133.5,446.5 L133.5,455.0 Q133.5,457.0 135.5,457.0 L139.5,457.0 Q141.5,457.0 141.5,455.0 L141.5,446.5" stroke="#e4e6e7" stroke-width="2.0" fill="none" /><rect x="132.5" y="581.5" width="27" height="11" rx="0" stroke="#e4e6e7" stroke-width="2.0" fill="none"/><path d="M144.5,581.5 L144.5,592.5 M154,581.5 L154,592.5" stroke="#e4e6e7" stroke-width="2.0" fill="none" /><path d="M130.5,716 L141,724.5 L150.8,717 L161.3,725 L161.3,743.5 L150.8,735 L141,743.3 L130.5,734.5 Z M141,724.5 L141,743.3 M150.8,717 L150.8,735" stroke="#e4e6e7" stroke-width="2.0" fill="none" /><path d="M130.5,874.15 L136.08,862 L155.92,862 L161.5,874.15 L161.5,886 Q161.5,889 158.5,889 L133.5,889 Q130.5,889 130.5,886 Z" stroke="#ffffff" stroke-width="2.0" fill="none" /><path d="M130.5,874.15 L139.8,874.15 L142.28,878.74 L149.72,878.74 L152.2,874.15 L161.5,874.15" stroke="#ffffff" stroke-width="2.0" fill="none" /><path d="M132,1026 L134.5,1023 L134.5,1014 Q134.5,1004 145,1004 Q155.5,1004 155.5,1014 L155.5,1023 L158,1026 Z M141.5,1029 Q145,1033 148.5,1029" stroke="#e4e6e7" stroke-width="2.0" fill="none" /><path d="M148,1177.0 L134,1177.0 Q131,1177.0 131,1174.0 L131,1150.5 Q131,1147.5 134,1147.5 L157.5,1147.5 Q160.5,1147.5 160.5,1150.5 L160.5,1167.5" stroke="#e4e6e7" stroke-width="2.0" fill="none" /><path d="M151.5,1174.5 L155,1178.0 L162,1171.0" stroke="#e4e6e7" stroke-width="2.0" fill="none" /><rect x="140" y="1156.5" width="2.2" height="2.2" fill="#e4e6e7"/><rect x="140" y="1165.5" width="2.2" height="2.2" fill="#e4e6e7"/><rect x="149" y="1156.5" width="2.2" height="2.2" fill="#e4e6e7"/><rect x="149" y="1165.5" width="2.2" height="2.2" fill="#e4e6e7"/><path d="M130.5,1233 L134,1233 L137,1227 L141,1234.5 L148,1220 L155,1234 L161.5,1234" stroke="#e4e6e7" stroke-width="2.0" fill="none" /><rect x="147" y="1212" width="2" height="2.2" fill="#e4e6e7"/><rect x="147" y="1218" width="2" height="2.2" fill="#e4e6e7"/><rect x="147" y="1224" width="2" height="2.2" fill="#e4e6e7"/><rect x="147" y="1230" width="2" height="2.2" fill="#e4e6e7"/><rect x="147" y="1236" width="2" height="2.2" fill="#e4e6e7"/><path d="M148,1305.0 L134,1305.0 Q131,1305.0 131,1302.0 L131,1278.5 Q131,1275.5 134,1275.5 L157.5,1275.5 Q160.5,1275.5 160.5,1278.5 L160.5,1295.5" stroke="#e4e6e7" stroke-width="2.0" fill="none" /><path d="M151.5,1302.5 L155,1306.0 L162,1299.0" stroke="#e4e6e7" stroke-width="2.0" fill="none" /><rect x="140" y="1284.5" width="2.2" height="2.2" fill="#e4e6e7"/><rect x="140" y="1293.5" width="2.2" height="2.2" fill="#e4e6e7"/><rect x="149" y="1284.5" width="2.2" height="2.2" fill="#e4e6e7"/><rect x="149" y="1293.5" width="2.2" height="2.2" fill="#e4e6e7"/><path d="M148,1369.0 L134,1369.0 Q131,1369.0 131,1366.0 L131,1342.5 Q131,1339.5 134,1339.5 L157.5,1339.5 Q160.5,1339.5 160.5,1342.5 L160.5,1359.5" stroke="#e4e6e7" stroke-width="2.0" fill="none" /><path d="M151.5,1366.5 L155,1370.0 L162,1363.0" stroke="#e4e6e7" stroke-width="2.0" fill="none" /><rect x="140" y="1348.5" width="2.2" height="2.2" fill="#e4e6e7"/><rect x="140" y="1357.5" width="2.2" height="2.2" fill="#e4e6e7"/><rect x="149" y="1348.5" width="2.2" height="2.2" fill="#e4e6e7"/><rect x="149" y="1357.5" width="2.2" height="2.2" fill="#e4e6e7"/><path d="M132.5,1405 L132.5,1431 L160,1431 M139.2,1413 L139.2,1425 M145.2,1407 L145.2,1425 M151.6,1410 L151.6,1425 M157.5,1413 L157.5,1425" stroke="#e4e6e7" stroke-width="2.0" fill="none" /><circle cx="145" cy="1483" r="14.3" stroke="#e4e6e7" stroke-width="2.0" fill="none"/><path d="M140,1479 Q140,1473.5 145,1473.5 Q150,1473.5 150,1478.5 Q150,1482 145.3,1484.5 L145.3,1487.5 M145.3,1491 L145.3,1492" stroke="#e4e6e7" stroke-width="2.0" fill="none" /><path d="M148,1561.0 L134,1561.0 Q131,1561.0 131,1558.0 L131,1534.5 Q131,1531.5 134,1531.5 L157.5,1531.5 Q160.5,1531.5 160.5,1534.5 L160.5,1551.5" stroke="#e4e6e7" stroke-width="2.0" fill="none" /><path d="M151.5,1558.5 L155,1562.0 L162,1555.0" stroke="#e4e6e7" stroke-width="2.0" fill="none" /><rect x="140" y="1540.5" width="2.2" height="2.2" fill="#e4e6e7"/><rect x="140" y="1549.5" width="2.2" height="2.2" fill="#e4e6e7"/><rect x="149" y="1540.5" width="2.2" height="2.2" fill="#e4e6e7"/><rect x="149" y="1549.5" width="2.2" height="2.2" fill="#e4e6e7"/><path d="M148,1625.0 L134,1625.0 Q131,1625.0 131,1622.0 L131,1598.5 Q131,1595.5 134,1595.5 L157.5,1595.5 Q160.5,1595.5 160.5,1598.5 L160.5,1615.5" stroke="#e4e6e7" stroke-width="2.0" fill="none" /><path d="M151.5,1622.5 L155,1626.0 L162,1619.0" stroke="#e4e6e7" stroke-width="2.0" fill="none" /><rect x="140" y="1604.5" width="2.2" height="2.2" fill="#e4e6e7"/><rect x="140" y="1613.5" width="2.2" height="2.2" fill="#e4e6e7"/><rect x="149" y="1604.5" width="2.2" height="2.2" fill="#e4e6e7"/><rect x="149" y="1613.5" width="2.2" height="2.2" fill="#e4e6e7"/><path d="M134.5,1660 L147.5,1660 L156.0,1669 L156.0,1689 L134.5,1689 Z M147.5,1660 L147.5,1669 L156.0,1669" stroke="#e4e6e7" stroke-width="2.0" fill="none" /><path d="M140.0,1676.5 L150.0,1676.5 M140.0,1682 L145.5,1682" stroke="#e4e6e7" stroke-width="2.0" fill="none" /><path d="M148,1753.0 L134,1753.0 Q131,1753.0 131,1750.0 L131,1726.5 Q131,1723.5 134,1723.5 L157.5,1723.5 Q160.5,1723.5 160.5,1726.5 L160.5,1743.5" stroke="#e4e6e7" stroke-width="2.0" fill="none" /><path d="M151.5,1750.5 L155,1754.0 L162,1747.0" stroke="#e4e6e7" stroke-width="2.0" fill="none" /><rect x="140" y="1732.5" width="2.2" height="2.2" fill="#e4e6e7"/><rect x="140" y="1741.5" width="2.2" height="2.2" fill="#e4e6e7"/><rect x="149" y="1732.5" width="2.2" height="2.2" fill="#e4e6e7"/><rect x="149" y="1741.5" width="2.2" height="2.2" fill="#e4e6e7"/><path d="M148,1817.0 L134,1817.0 Q131,1817.0 131,1814.0 L131,1790.5 Q131,1787.5 134,1787.5 L157.5,1787.5 Q160.5,1787.5 160.5,1790.5 L160.5,1807.5" stroke="#e4e6e7" stroke-width="2.0" fill="none" /><path d="M151.5,1814.5 L155,1818.0 L162,1811.0" stroke="#e4e6e7" stroke-width="2.0" fill="none" /><rect x="140" y="1796.5" width="2.2" height="2.2" fill="#e4e6e7"/><rect x="140" y="1805.5" width="2.2" height="2.2" fill="#e4e6e7"/><rect x="149" y="1796.5" width="2.2" height="2.2" fill="#e4e6e7"/><rect x="149" y="1805.5" width="2.2" height="2.2" fill="#e4e6e7"/><path d="M159.5,107.7 L187,122.5 L187,153 L159.5,168.2 L132,153 L132,122.5 Z" fill="#e25f52" stroke="none"/><path d="M162.25,131 L150.85,131 Q148,131 148,133.85 L148,147.15 Q148,150.0 150.85,150.0 L166.05,150.0 Q168.9,150.0 168.9,147.15 L168.9,139.55" stroke="#ffffff" stroke-width="2.0" fill="none" /><path d="M156.075,137.175 L161.3,140.5 L156.075,143.825 Z" fill="#ffffff"/><path d="M166.525,127.675 A5.699999999999999,5.699999999999999 0 0 1 171.75,133.375 M166.05,131.475 A2.4699999999999998,2.4699999999999998 0 0 1 168.425,134.135" stroke="#ffffff" stroke-width="2.0" fill="none" /><path d="M134.5,195.5 L155.5,195.5 L155.5,204.5 L134.5,204.5 Z M145,204.5 L145,209.5 M137.5,209.5 L152.5,209.5 M137.5,209.5 L137.5,215 M152.5,209.5 L152.5,215 M130.5,215 L143.5,215 L143.5,224.5 L130.5,224.5 Z M146.5,215 L159.5,215 L159.5,224.5 L146.5,224.5 Z" stroke="#f2f3f3" stroke-width="2.2" fill="none" /><path d="M627.5,210.5 L646,210.5" stroke="#7d8287" stroke-width="2.2" fill="none" /><circle cx="655" cy="210.5" r="8.3" stroke="#7d8287" stroke-width="2.2" fill="none"/><rect x="690" y="197" width="10" height="10" rx="0" stroke="#f2f3f3" stroke-width="2.2" fill="none"/><rect x="690" y="214" width="10" height="10" rx="0" stroke="#f2f3f3" stroke-width="2.2" fill="none"/><rect x="707.5" y="197" width="10" height="10" rx="0" stroke="#f2f3f3" stroke-width="2.2" fill="none"/><rect x="707.5" y="214" width="10" height="10" rx="0" stroke="#f2f3f3" stroke-width="2.2" fill="none"/><path d="M931.70,124.00 L935.93,134.68 L947.39,135.40 L938.55,142.72 L941.40,153.85 L931.70,147.70 L922.00,153.85 L924.85,142.72 L916.01,135.40 L927.47,134.68 Z" stroke="#f2f3f3" stroke-width="2.0" fill="none" /><path d="M1014.5,124.5 L1027,124.5 L1041,137.5 L1028,151 L1014.5,137.5 Z" stroke="#f2f3f3" stroke-width="2.0" fill="none" /><rect x="1020" y="130.3" width="2" height="2" fill="#f2f3f3"/><circle cx="1155" cy="130.5" r="5.5" stroke="#f2f3f3" stroke-width="2.0" fill="none"/><circle cx="1169" cy="130.5" r="5.5" stroke="#f2f3f3" stroke-width="2.0" fill="none"/><path d="M1147.5,153.5 L1147.5,147 Q1147.5,141 1155,141 Q1162,141 1162,147 L1162,153.5 M1162,147 Q1162,141 1169,141 Q1176.5,141 1176.5,147 L1176.5,153.5" stroke="#f2f3f3" stroke-width="2.0" fill="none" /><circle cx="1316.7" cy="137.5" r="14.3" stroke="#f2f3f3" stroke-width="2.0" fill="none"/><path d="M1316.7,135.5 L1316.7,144.5" stroke="#f2f3f3" stroke-width="2.0" fill="none" /><rect x="1315.6000000000001" y="130.5" width="2.2" height="2.4" fill="#f2f3f3"/><path d="M2990.5,52.5 L3013.5,52.5 Q3015.5,52.5 3015.5,54.5 L3015.5,69.5 Q3015.5,71.5 3013.5,71.5 L3004,71.5 L2995.5,79.5 L2995.5,71.5 L2990.5,71.5 Q2988.5,71.5 2988.5,69.5 L2988.5,54.5 Q2988.5,52.5 2990.5,52.5 Z M2994.5,58.5 L3010,58.5 M2994.5,64.5 L3005.5,64.5" stroke="#f2f3f3" stroke-width="2.0" fill="none" /><circle cx="3083" cy="65" r="14.3" stroke="#f2f3f3" stroke-width="2.0" fill="none"/><path d="M3078,61 Q3078,55.5 3083,55.5 Q3088,55.5 3088,60.5 Q3088,64 3083.3,66.5 L3083.3,69.5 M3083.3,73 L3083.3,74" stroke="#f2f3f3" stroke-width="2.0" fill="none" /><path d="M3150,62.5 L3144.5,62.5 L3144.5,79.5 L3166,79.5 L3166,62.5 L3160.5,62.5 M3155.2,73.5 L3155.2,53.5 M3148.5,60 L3155.2,53.5 L3162,60" stroke="#f2f3f3" stroke-width="2.0" fill="none" /><path d="M3298,67 Q3294,63 3298,59 L3303,54 Q3307,50 3311,54 Q3315,58 3311,62 L3308,65 M3303,62 Q3307,66 3303,70 L3298,75 Q3294,79 3290,75 Q3286,71 3290,67 L3293,64" stroke="#f2f3f3" stroke-width="2.0" fill="none" /><path d="M3390,54.5 Q3392,67 3404,68 Q3392,69 3390,82 Q3388,69 3376,68 Q3388,67 3390,54.5 Z" stroke="#1a1d1f" stroke-width="2.0" fill="none" /><path d="M3401,52.5 L3401,61 M3396.8,56.8 L3405.2,56.8" stroke="#1a1d1f" stroke-width="1.8" fill="none" /><path d="M2609,203.5 L2603,210 L2609,216.5" stroke="#c4d8fb" stroke-width="2.0" fill="none" /><circle cx="2662.5" cy="209.5" r="14" stroke="#c4d8fb" stroke-width="2.0" fill="none"/><path d="M2661.5,201 L2661.5,211.5 L2668,211.5" stroke="#c4d8fb" stroke-width="2.0" fill="none" /><path d="M3032,207 L3038,213 L3044,207" stroke="#c4d8fb" stroke-width="2.0" fill="none" /><path d="M3085,204 L3091,210.5 L3085,217" stroke="#7c8286" stroke-width="2.0" fill="none" /><path d="M3146,215.5 L3148.5,212.5 L3148.5,203.5 Q3148.5,193.5 3159,193.5 Q3169.5,193.5 3169.5,203.5 L3169.5,212.5 L3172,215.5 Z M3155.5,218.5 Q3159,222.5 3162.5,218.5" stroke="#f2f3f3" stroke-width="2.0" fill="none" /><circle cx="585.5" cy="296.5" r="9.5" stroke="#f2f3f3" stroke-width="2.0" fill="none"/><path d="M592.5,303.5 L602,313" stroke="#f2f3f3" stroke-width="2.0" fill="none" /><path d="M1469.5,284.5 L1469.5,313 M1455,299 L1484,299" stroke="#f2f3f3" stroke-width="2.2" fill="none" /><circle cx="3068.7" cy="297.5" r="14.3" stroke="#f2f3f3" stroke-width="2.0" fill="none"/><path d="M3068.7,295.5 L3068.7,304.5" stroke="#f2f3f3" stroke-width="2.0" fill="none" /><rect x="3067.6" y="290.5" width="2.2" height="2.4" fill="#f2f3f3"/><path d="M3378,293.5 L3383.5,299 L3389,293.5" stroke="#f2f3f3" stroke-width="2.0" fill="none" /><rect x="33" y="1857.5" width="29" height="27" rx="3" stroke="#f2f3f3" stroke-width="2.0" fill="none"/><path d="M33,1864.5 L62,1864.5 M39.5,1869.5 L45,1874 L39.5,1878.5 M48,1878.5 L55,1878.5" stroke="#f2f3f3" stroke-width="2.0" fill="none" /><circle cx="3415" cy="1870" r="14.3" stroke="#f2f3f3" stroke-width="2.0" fill="none"/><path d="M3410,1866 Q3410,1860.5 3415,1860.5 Q3420,1860.5 3420,1865.5 Q3420,1869 3415.3,1871.5 L3415.3,1874.5 M3415.3,1878 L3415.3,1879" stroke="#f2f3f3" stroke-width="2.0" fill="none" /></svg>
</div></body></html>
